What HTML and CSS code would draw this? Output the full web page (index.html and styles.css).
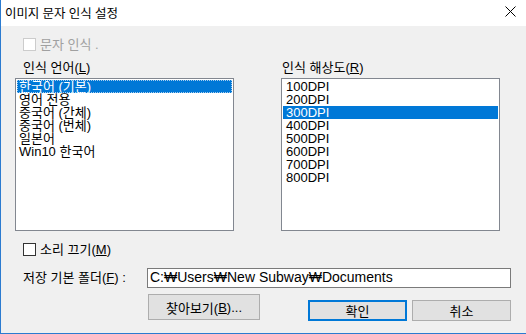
FILE: index.html
```html
<!DOCTYPE html>
<html lang="ko">
<head>
<meta charset="utf-8">
<title>이미지 문자 인식 설정</title>
<link rel="stylesheet" href="styles.css">
</head>
<body>
<div class="window">
  <div class="titlebar">
    <span class="title">이미지 문자 인식 설정</span>
    <svg class="close" width="11" height="11" viewBox="0 0 11 11"><path d="M0.5 0.5 L10.5 10.5 M10.5 0.5 L0.5 10.5" stroke="#000" stroke-width="1" fill="none"/></svg>
  </div>
  <div class="body">
    <div class="check disabled"><span class="box"></span><span>문자 인식 .</span></div>
    <div class="lists">
      <div class="col">
        <div class="lbl lbl-left">인식 언어(<u>L</u>)</div>
        <ul class="listbox">
          <li class="sel focus">한국어 (기본)</li>
          <li>영어 전용</li>
          <li>중국어 (간체)</li>
          <li>중국어 (번체)</li>
          <li>일본어</li>
          <li>Win10 한국어</li>
        </ul>
      </div>
      <div class="col">
        <div class="lbl lbl-right">인식 해상도(<u>R</u>)</div>
        <ul class="listbox dpi">
          <li>100DPI</li>
          <li>200DPI</li>
          <li class="sel">300DPI</li>
          <li>400DPI</li>
          <li>500DPI</li>
          <li>600DPI</li>
          <li>700DPI</li>
          <li>800DPI</li>
        </ul>
      </div>
    </div>
    <div class="check sound"><span class="box"></span><span>소리 끄기(<u>M</u>)</span></div>
    <div class="folder-row">
      <span class="folder-lbl">저장 기본 폴더(<u>F</u>) :</span>
      <div class="input">C:₩Users₩New Subway₩Documents</div>
    </div>
    <div class="btn-row">
      <div class="btn browse">찾아보기(<u>B</u>)...</div>
      <div class="btn ok">확인</div>
      <div class="btn cancel">취소</div>
    </div>
  </div>
</div>
</body>
</html>
```
FILE: styles.css
```css
* { box-sizing: border-box; }
html, body { margin: 0; padding: 0; }
body {
  width: 526px;
  height: 334px;
  overflow: hidden;
  font-family: "Liberation Sans", "Noto Sans CJK KR", sans-serif;
  font-size: 13px;
  color: #000;
  background: #f0f0f0;
}
u { text-decoration: underline; text-underline-offset: 1px; }
.window {
  width: 526px;
  height: 334px;
  border-left: 1px solid #2b7bd0;
  border-bottom: 1px solid #2b7bd0;
  background: #f0f0f0;
  display: flex;
  flex-direction: column;
}
.titlebar {
  height: 26px;
  background: #fff;
  display: flex;
  align-items: center;
  justify-content: space-between;
  padding: 0 10px 0 4px;
}
.title {
  font-family: "Noto Sans CJK KR", sans-serif;
  font-size: 12.5px;
  line-height: 14px;
  letter-spacing: -0.1px;
  margin-top: -1px;
}
.close { margin-top: -3px; }
.body {
  flex: 1;
  display: flex;
  flex-direction: column;
  padding: 12px 0 0 14px;
}
.check {
  display: flex;
  align-items: center;
  height: 13px;
  line-height: 13px;
  margin-left: 8px;
  gap: 4px;
}
.box {
  width: 13px;
  height: 13px;
  border: 1px solid #333;
  background: #fff;
}
.check.disabled { color: #a0a0a0; }
.check.disabled .box { border-color: #cccccc; }
.lists {
  display: grid;
  grid-template-columns: 219px 219px;
  column-gap: 47px;
  margin-top: 10px;
}
.lbl {
  height: 14px;
  line-height: 14px;
  margin-bottom: 3px;
}
.lbl-left { padding-left: 8px; }
.lbl-right { padding-left: 1px; }
.listbox {
  list-style: none;
  margin: 0;
  padding: 1px;
  height: 153px;
  border: 1px solid #828790;
  background: #fff;
}
.listbox li {
  height: 13px;
  line-height: 13px;
  padding-left: 2px;
  white-space: nowrap;
}
.listbox.dpi li { font-size: 13px; padding-left: 3px; }
.listbox li.sel {
  background: #0078d7;
  color: #fff;
}
.listbox li.focus {
  outline: 1px dotted #a8cff0;
  outline-offset: -1px;
}
.sound { margin-top: 12px; }
.sound .box { border-color: #333; }
.folder-row {
  display: flex;
  align-items: center;
  margin-top: 12px;
  height: 20px;
  padding-left: 8px;
}
.folder-lbl { width: 124px; line-height: 14px; }
.input {
  width: 364px;
  height: 20px;
  border: 1px solid #7a7a7a;
  background: #fff;
  font-size: 14px;
  line-height: 17px;
  padding-left: 2px;
  white-space: nowrap;
}
.btn-row {
  display: flex;
  align-items: flex-start;
  margin-top: 6px;
  padding-left: 133px;
}
.btn {
  display: flex;
  align-items: center;
  justify-content: center;
  background: #e1e1e1;
  border: 1px solid #adadad;
  font-size: 13px;
}
.browse { width: 112px; height: 26px; }
.ok {
  width: 99px;
  height: 21px;
  margin-top: 6px;
  margin-left: 48px;
  border: 2px solid #0078d7;
}
.cancel {
  width: 99px;
  height: 21px;
  margin-top: 6px;
  margin-left: 5px;
}
```
